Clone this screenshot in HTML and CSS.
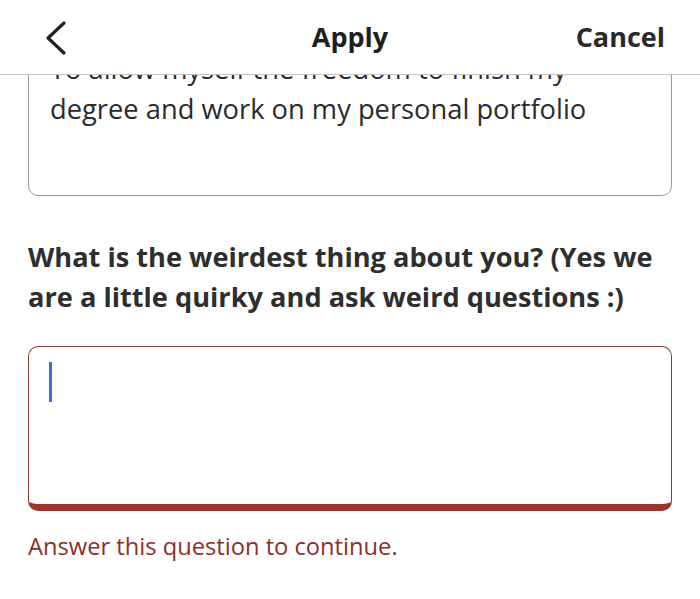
FILE: index.html
```html
<!DOCTYPE html>
<html>
<head>
<meta charset="utf-8">
<link rel="stylesheet" href="styles.css">
</head>
<body>
<div class="page">
  <header class="topbar">
    <button class="back" aria-label="Back">
      <svg width="24" height="36" viewBox="0 0 24 36"><polyline points="20,3 4,18 20,33" fill="none" stroke="#222" stroke-width="3.2" stroke-linecap="round" stroke-linejoin="round"/></svg>
    </button>
    <div class="title">Apply</div>
    <div class="cancel">Cancel</div>
  </header>
  <main class="scroll">
    <div class="content">
      <div class="answer-box">
        <p class="answer-text">To allow myself the freedom to finish my degree and work on my personal portfolio</p>
      </div>
      <h2 class="question">What is the weirdest thing about you? (Yes we are a little quirky and ask weird questions :)</h2>
      <div class="input-box error">
        <span class="caret"></span>
      </div>
      <p class="error-msg">Answer this question to continue.</p>
    </div>
  </main>
</div>
</body>
</html>
```
FILE: styles.css
```css
* { box-sizing: border-box; }
html, body { margin: 0; padding: 0; background: #fff; }
body { font-family: "Open Sans", "Noto Sans", sans-serif; color: #2b2b2b; }
.page { width: 700px; height: 599px; overflow: hidden; display: flex; flex-direction: column; }
.topbar {
  flex: 0 0 75px; height: 75px;
  background: #fff; border-bottom: 1px solid #c4c4c4;
  display: grid; grid-template-columns: 1fr auto 1fr; align-items: center;
  padding: 0 35px;
}
.back { border: 0; background: none; padding: 0; width: 24px; height: 36px; display: flex; margin: 1px 0 0 9px; justify-self: start; }
.title { font-weight: 700; font-size: 27px; color: #1f1f1f; margin-top: -2px; }
.cancel { justify-self: end; font-weight: 700; font-size: 27px; color: #2a2a2a; margin-top: -2px; }
.scroll { flex: 1; overflow: hidden; }
.content { padding: 0 28px; margin-top: -55px; }
.answer-box {
  border: 1px solid #9a9a9a; border-radius: 10px;
  padding: 28px 20px 66px 21px;
}
.answer-text { margin: 0; font-size: 27.3px; line-height: 40px; color: #2b2b2b; width: 566px; }
.question { margin: 41px 0 0; font-size: 27.2px; line-height: 40px; font-weight: 700; color: #2e2e2e; }
.input-box {
  margin-top: 29px; height: 165px;
  border: 1.5px solid #8e3b38; border-bottom: 7px solid #9b3530;
  border-radius: 10px; padding: 15px 20px;
}
.caret { display: block; width: 2.5px; height: 40px; background: #3a6fd8; }
.error-msg { margin: 20px 0 0; font-size: 23.7px; line-height: 30px; color: #8a2f2b; }
```
